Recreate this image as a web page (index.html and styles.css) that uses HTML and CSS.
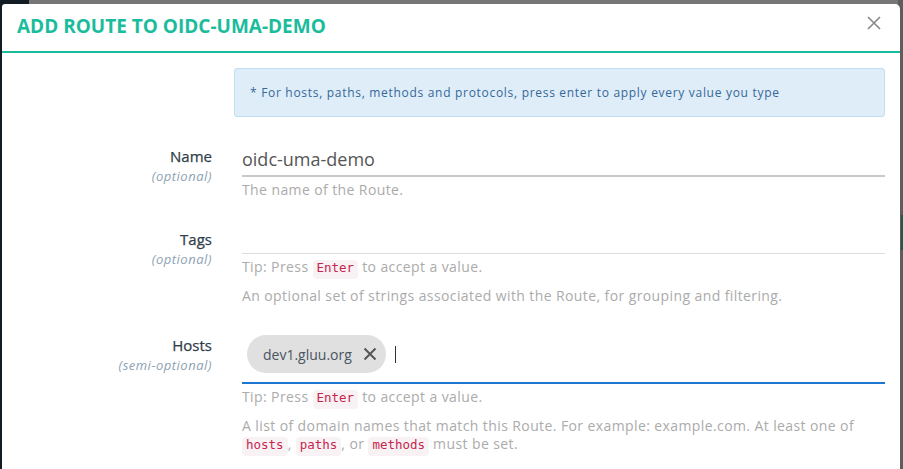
FILE: index.html
```html
<!DOCTYPE html>
<html lang="en">
<head>
<meta charset="utf-8">
<title>Add route</title>
<link rel="stylesheet" href="styles.css">
</head>
<body>
<div class="backdrop-mark"></div>
<div class="modal">
  <div class="modal-header">
    <h4 class="modal-title">ADD ROUTE TO OIDC-UMA-DEMO</h4>
    <button class="close" type="button" aria-label="Close">
      <svg width="14" height="14" viewBox="0 0 14 14"><path d="M1 1L13 13M13 1L1 13" stroke="#8a8a8a" stroke-width="1.7" fill="none"/></svg>
    </button>
  </div>
  <div class="modal-body">
    <div class="form-row alert-row">
      <div class="label-col"></div>
      <div class="alert">* For hosts, paths, methods and protocols, press enter to apply every value you type</div>
    </div>

    <div class="form-row">
      <label class="label-col"><span class="lbl">Name</span><em class="opt">(optional)</em></label>
      <div class="field">
        <div class="text-input">oidc-uma-demo</div>
        <p class="help first">The name of the Route.</p>
      </div>
    </div>

    <div class="form-row">
      <label class="label-col"><span class="lbl">Tags</span><em class="opt">(optional)</em></label>
      <div class="field">
        <div class="tags-input"></div>
        <p class="help first">Tip: Press <code>Enter</code> to accept a value.</p>
        <p class="help">An optional set of strings associated with the Route, for grouping and filtering.</p>
      </div>
    </div>

    <div class="form-row">
      <label class="label-col"><span class="lbl">Hosts</span><em class="opt">(semi-optional)</em></label>
      <div class="field">
        <div class="tags-input focused">
          <span class="chip">dev1.gluu.org<svg class="chip-x" width="14" height="14" viewBox="0 0 14 14"><path d="M1.5 1.5L12.5 12.5M12.5 1.5L1.5 12.5" stroke="#555" stroke-width="2" fill="none"/></svg></span>
          <span class="caret"></span>
        </div>
        <p class="help first">Tip: Press <code>Enter</code> to accept a value.</p>
        <p class="help">A list of domain names that match this Route. For example: example.com. At least one of <code>hosts</code>, <code>paths</code>, or <code>methods</code> must be set.</p>
      </div>
    </div>
  </div>
</div>
</body>
</html>
```
FILE: styles.css
```css
html, body {
  margin: 0;
  padding: 0;
}
body {
  height: 469px;
  overflow: hidden;
  background: linear-gradient(to right, #121c25 0 29px, #777777 29px 898px, #5d5d5d 898px);
  font-family: "Open Sans", "Liberation Sans", sans-serif;
  position: relative;
}
.backdrop-mark {
  position: absolute;
  right: 0;
  top: 215px;
  width: 2px;
  height: 35px;
  background: #1d5a4c;
}
.modal {
  margin: 4px 3px 0 2px;
  background: #fff;
  border-radius: 3px 5px 0 0;
  height: 465px;
}
.modal-header {
  display: flex;
  justify-content: space-between;
  align-items: flex-start;
  height: 47px;
  padding: 0 15px;
  border-bottom: 2px solid #1abc9c;
}
.modal-title {
  margin: 12px 0 0;
  font-size: 19px;
  line-height: 21px;
  font-weight: 700;
  letter-spacing: 0;
  color: #1abc9c;
}
.close {
  margin: 12px 4px 0 0;
  padding: 0;
  border: 0;
  background: none;
  width: 14px;
  height: 14px;
  display: block;
}
.close svg { display: block; }
.modal-body {
  padding: 15px 15px 0;
}
.form-row {
  display: grid;
  grid-template-columns: 217px 1fr;
  margin-bottom: 27px;
}
.alert-row {
  margin-bottom: 26px;
}
.alert {
  border: 1px solid #bfe0f2;
  background: #dfedf8;
  border-radius: 3px;
  padding: 15px 15px;
  font-size: 12px;
  line-height: 17px;
  letter-spacing: 0.7px;
  color: #34689a;
}
.label-col {
  display: flex;
  flex-direction: column;
  align-items: flex-end;
  padding: 3px 22px 0 0;
}
.lbl {
  font-size: 15px;
  line-height: 20px;
  font-weight: 500;
  color: #2f3d49;
  -webkit-text-stroke: 0.25px #2f3d49;
}
.opt {
  font-size: 13px;
  line-height: 20px;
  letter-spacing: 0.5px;
  color: #8da2b3;
}
.field {
  padding-left: 8px;
}
.text-input {
  height: 32px;
  line-height: 32px;
  font-size: 18px;
  color: #555;
  border-bottom: 2px solid #c9c9c9;
}
.tags-input {
  height: 27px;
  border-bottom: 1px solid #dddddd;
}
.tags-input.focused {
  height: auto;
  display: flex;
  align-items: center;
  padding: 3px 0 9px 5px;
  border-bottom: 2px solid #1f76d0;
}
.chip {
  display: inline-flex;
  align-items: center;
  height: 38px;
  padding: 0 9px 0 16px;
  border-radius: 19px;
  background: #e0e0e0;
  font-size: 14px;
  color: #4a5560;
}
.chip-x {
  margin-left: 11px;
}
.caret {
  width: 1px;
  height: 17px;
  background: #333;
  margin-left: 9px;
}
.help {
  margin: 10px 0 0;
  font-size: 14px;
  line-height: 18px;
  letter-spacing: 0.4px;
  color: #ababab;
}
.help.first {
  margin-top: 4px;
}
code {
  font-family: "DejaVu Sans Mono", "Liberation Mono", monospace;
  font-size: 12.5px;
  letter-spacing: 0;
  padding: 0 4px 4px;
  border-radius: 4px;
  background: #f9f2f4;
  color: #c7254e;
}
```
